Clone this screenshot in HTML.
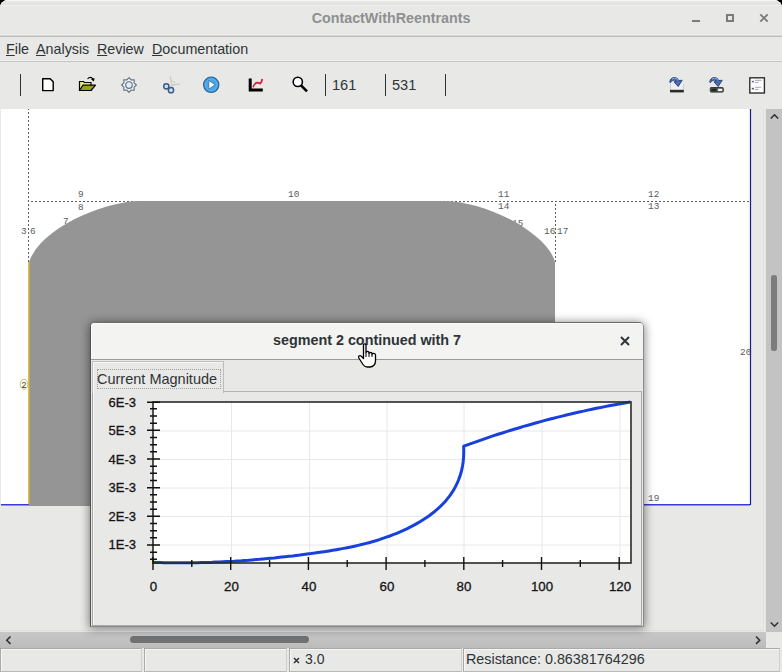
<!DOCTYPE html>
<html><head><meta charset="utf-8">
<style>
html,body{margin:0;padding:0;}
body{width:782px;height:672px;overflow:hidden;position:relative;background:#000;font-family:"Liberation Sans",sans-serif;color:#2e3436;}
.abs{position:absolute;}
#win{position:absolute;left:0;top:0;width:782px;height:672px;background:#e8e8e7;border-radius:8px 8px 0 0;overflow:hidden;}
#title{position:absolute;left:0;top:0;width:782px;height:34px;background:#e8e8e7;}
.ttl{position:absolute;left:0;width:782px;top:10px;text-align:center;font-weight:bold;font-size:14.3px;color:#8e9090;line-height:17px;}
.hl{position:absolute;left:0;width:782px;height:1px;}
.menu{position:absolute;top:41px;font-size:14.3px;line-height:17px;color:#2e3436;}
.menu u{text-decoration:underline;text-decoration-thickness:1px;text-underline-offset:1px;}
.sep{position:absolute;width:1px;background:#2e3436;}
.tnum{position:absolute;top:77px;font-size:14.6px;line-height:17px;color:#2e3436;}
.lbl{position:absolute;font-family:"Liberation Mono",monospace;font-size:9.4px;line-height:10px;color:#5c5c5c;}
.stbox{position:absolute;top:648px;height:22px;border:1px solid #a9a9a9;border-right-color:#d0d0d0;border-bottom-color:#b8b8b8;box-shadow:inset 1px 1px 0 #f7f7f7;}
</style></head>
<body>
<div id="win">
  <div id="title"></div>
  <div class="hl" style="top:0px;background:#f6f6f6"></div>
  <div class="hl" style="top:2px;height:3px;background:#e4e4e3"></div>
  <div class="hl" style="top:5px;background:#efefee"></div>
  <div class="ttl">ContactWithReentrants</div>
  <!-- window controls -->
  <div class="abs" style="left:692px;top:20px;width:8px;height:2px;background:#7b7d7d"></div>
  <div class="abs" style="left:726px;top:14px;width:4px;height:4px;border:2px solid #7b7d7d"></div>
  <svg class="abs" style="left:758px;top:12px" width="12" height="12" viewBox="0 0 12 12"><path d="M2.3 2.3L9.7 9.7M9.7 2.3L2.3 9.7" stroke="#7b7d7d" stroke-width="1.9"/></svg>
  <div class="hl" style="top:34px;background:#efefef"></div>
  <div class="hl" style="top:35px;height:1px;background:#d6d6d6"></div>
  <div class="hl" style="top:36px;background:#bfbfbf"></div>
  <!-- menu -->
  <div class="menu" style="left:6px"><u>F</u>ile</div>
  <div class="menu" style="left:36px"><u>A</u>nalysis</div>
  <div class="menu" style="left:97px"><u>R</u>eview</div>
  <div class="menu" style="left:152px"><u>D</u>ocumentation</div>
  <div class="hl" style="top:60px;background:#efefef"></div>
  <div class="hl" style="top:61px;background:#c4c4c4"></div>

  <!-- toolbar -->
  <div class="sep" style="left:20px;top:74px;height:22px"></div>
  <svg class="abs" style="left:40px;top:76px" width="16" height="17" viewBox="0 0 16 17">
    <path d="M2.7 2.7H10.2L13.2 5.7V14.6H2.7Z" fill="#fff" stroke="#000" stroke-width="1.45" stroke-linejoin="round"/>
  </svg>
  <svg class="abs" style="left:76px;top:74px" width="22" height="20" viewBox="0 0 22 20">
    <path d="M3.5 7.5H7.5L8.5 8.5H15V16.5H3.5Z" fill="#e8e87e" stroke="#000" stroke-width="1.2"/>
    <path d="M3.5 16.5L7 11.2H19.5L15 16.5Z" fill="#96a020" stroke="#000" stroke-width="1.2" stroke-linejoin="round"/>
    <path d="M11.5 4.8Q14.5 1.8 17 5" fill="none" stroke="#000" stroke-width="1.1"/>
    <path d="M15 5.5L18.5 4L18 7.5Z" fill="#000"/>
  </svg>
  <svg class="abs" style="left:120px;top:76px" width="18" height="18" viewBox="0 0 18 18">
    <path d="M9.00 1.60 L11.10 3.92 L14.23 3.77 L14.08 6.90 L16.40 9.00 L14.08 11.10 L14.23 14.23 L11.10 14.08 L9.00 16.40 L6.90 14.08 L3.77 14.23 L3.92 11.10 L1.60 9.00 L3.92 6.90 L3.77 3.77 L6.90 3.92Z" fill="#eef3f8" stroke="#66747f" stroke-width="1.15" stroke-linejoin="round"/>
    <circle cx="9" cy="9" r="3.3" fill="#e2ecf5" stroke="#66747f" stroke-width="1.15"/>
  </svg>
  <svg class="abs" style="left:160px;top:74px" width="22" height="22" viewBox="0 0 22 22">
    <path d="M10 2.5L12 10.5M20 10Q14 10.5 11 12" fill="none" stroke="#c4c8c8" stroke-width="1.2"/>
    <circle cx="13" cy="9" r="1.8" fill="#dfe8d0" stroke="#c8cfc0" stroke-width="0.8"/>
    <circle cx="6.3" cy="12.3" r="2.6" fill="#c8e4f6" stroke="#3d5a82" stroke-width="1.5"/>
    <circle cx="11" cy="16.2" r="2.6" fill="#c8e4f6" stroke="#3d5a82" stroke-width="1.5"/>
  </svg>
  <svg class="abs" style="left:201px;top:75px" width="20" height="20" viewBox="0 0 20 20">
    <circle cx="10.2" cy="9.8" r="7.6" fill="#48a6e6" stroke="#2f6a9c" stroke-width="1.3"/>
    <circle cx="10.2" cy="9.8" r="5.8" fill="none" stroke="#5ab6f0" stroke-width="1"/>
    <path d="M7.8 5.4L14.2 9.8L7.8 14.2Z" fill="#fff" stroke="#2b6ea8" stroke-width="0.8" stroke-linejoin="round"/>
  </svg>
  <svg class="abs" style="left:246px;top:76px" width="20" height="18" viewBox="0 0 20 18">
    <path d="M4.2 2.4V14H16.8" fill="none" stroke="#000" stroke-width="3"/>
    <path d="M7 11.2Q8.8 6.8 11 6.6Q13 6.6 14.2 7.6Q15.8 6 16.3 3" fill="none" stroke="#d41f3c" stroke-width="1.7"/>
  </svg>
  <svg class="abs" style="left:288px;top:74px" width="22" height="20" viewBox="0 0 22 20">
    <circle cx="9.8" cy="7.9" r="4.6" fill="#fff" stroke="#000" stroke-width="1.6"/>
    <path d="M13 11.3L19 17.3" stroke="#000" stroke-width="2.6"/>
  </svg>
  <div class="sep" style="left:325px;top:74px;height:22px"></div>
  <div class="tnum" style="left:332px">161</div>
  <div class="sep" style="left:385px;top:74px;height:22px"></div>
  <div class="tnum" style="left:392px">531</div>
  <div class="sep" style="left:445px;top:74px;height:22px"></div>

  <svg class="abs" style="left:664px;top:72px" width="26" height="26" viewBox="0 0 26 26">
    <path d="M6.5 12V18.5H19.5V12" fill="#eef0f4" stroke="#c9ced6" stroke-width="1"/>
    <path d="M5.8 9.5C6.5 5 12.5 3.8 15 8.6L18.2 8.2L14.2 14.6L10 9.8L12.6 9.4C11 7.6 8.2 7.8 6.2 10.8Z" fill="#4a6fb5" stroke="#273c70" stroke-width="0.9" stroke-linejoin="round"/><path d="M8 7.2C10 5.6 12.5 6 14 8" fill="none" stroke="#8fb0e0" stroke-width="0.9"/>
    <rect x="6" y="17.8" width="13.8" height="2.6" fill="#2e2a28"/>
  </svg>
  <svg class="abs" style="left:704px;top:72px" width="26" height="26" viewBox="0 0 26 26">
    <path d="M5.8 9.5C6.5 5 12.5 3.8 15 8.6L18.2 8.2L14.2 14.6L10 9.8L12.6 9.4C11 7.6 8.2 7.8 6.2 10.8Z" fill="#4a6fb5" stroke="#273c70" stroke-width="0.9" stroke-linejoin="round"/><path d="M8 7.2C10 5.6 12.5 6 14 8" fill="none" stroke="#8fb0e0" stroke-width="0.9"/>
    <rect x="6.3" y="15.5" width="13" height="4.6" rx="0.8" fill="#4a4d4a" stroke="#3a3a3a" stroke-width="1"/>
    <rect x="7.5" y="16.7" width="5" height="2.4" fill="#1d2a1d"/>
    <rect x="13.8" y="16.7" width="4.5" height="2.4" fill="#eef4ec"/>
  </svg>
  <svg class="abs" style="left:744px;top:72px" width="26" height="26" viewBox="0 0 26 26">
    <rect x="5.8" y="5.8" width="14.6" height="15.2" fill="#fff" stroke="#2e2e2e" stroke-width="1.4"/>
    <rect x="7.8" y="8.8" width="2.2" height="1.6" fill="#6070a8"/>
    <rect x="7.8" y="15.8" width="2.2" height="1.6" fill="#485a88"/>
    <path d="M11 8.3H17.5M11 10.4H14.5M11 15.3H17M11 17.4H14.5" stroke="#8a8f98" stroke-width="0.8"/>
  </svg>

  <!-- canvas area -->
  <div class="abs" style="left:0;top:109px;width:766px;height:523px;background:#e8e8e7"></div>
  <div class="abs" style="left:1px;top:109px;width:750px;height:396px;background:#fff"></div>
  <svg class="abs" style="left:0;top:0" width="782" height="672" viewBox="0 0 782 672">
    <path d="M28.5 109V262" stroke="#606060" stroke-width="1" stroke-dasharray="2 2" stroke-dashoffset="1"/>
    <path d="M28 201.5H750" stroke="#606060" stroke-width="1" stroke-dasharray="2 2" stroke-dashoffset="1"/>
    <path d="M555.5 201V262" stroke="#606060" stroke-width="1" stroke-dasharray="2 2" stroke-dashoffset="1"/>
  </svg>
  <div class="lbl" style="left:78px;top:190px">9</div>
  <div class="lbl" style="left:78px;top:203px">8</div>
  <div class="lbl" style="left:288px;top:190px">10</div>
  <div class="lbl" style="left:498px;top:190px">11</div>
  <div class="lbl" style="left:498px;top:202px">14</div>
  <div class="lbl" style="left:648px;top:190px">12</div>
  <div class="lbl" style="left:648px;top:202px">13</div>
  <div class="lbl" style="left:21px;top:227px">3</div>
  <div class="lbl" style="left:30px;top:227px">6</div>
  <div class="lbl" style="left:63px;top:217px">7</div>
  <div class="lbl" style="left:512px;top:219px">15</div>
  <div class="lbl" style="left:544px;top:227px">16</div>
  <div class="lbl" style="left:557px;top:227px">17</div>
  <div class="lbl" style="left:740px;top:348px">20</div>
  <div class="lbl" style="left:648px;top:494px">19</div>
  <svg class="abs" style="left:0;top:0" width="782" height="672" viewBox="0 0 782 672">
    <path d="M29 262C42 224 112 201 138 201H441.4C490 201 548 235 555 262V506H29Z" fill="#959595"/>
    <path d="M29 262V505" stroke="#cfae36" stroke-width="1.6"/>
    <path d="M1 504.8H29M643 504.8H750" fill="none" stroke="#3a3ad6" stroke-width="1.6"/><path d="M750.5 109V505" fill="none" stroke="#1c1c88" stroke-width="1.2"/>
    <ellipse cx="24" cy="384.3" rx="3.8" ry="5" fill="#fff" stroke="#d4c050" stroke-width="1"/>
  </svg>
  <div class="lbl" style="left:21.3px;top:380.5px;font-size:9px;color:#3a3a3a">2</div>

  <div class="abs" style="left:763px;top:109px;width:1px;height:522px;background:#e2e2e2"></div>
  <div class="abs" style="left:0;top:630px;width:763px;height:1px;background:#dedede"></div>
  <!-- scrollbars -->
  <div class="abs" style="left:766px;top:109px;width:16px;height:523px;background:#c3c3c3"></div>
  <div class="abs" style="left:771px;top:275px;width:6px;height:76px;border-radius:2.5px;background:#7a7c7d"></div>
  <svg class="abs" style="left:766px;top:109px" width="16" height="16" viewBox="0 0 16 16"><path d="M4.8 9.5L8.5 5.8L12.2 9.5" fill="none" stroke="#2e3436" stroke-width="1.6"/></svg>
  <svg class="abs" style="left:766px;top:616px" width="16" height="16" viewBox="0 0 16 16"><path d="M4.8 6.5L8.5 10.2L12.2 6.5" fill="none" stroke="#2e3436" stroke-width="1.6"/></svg>
  <div class="abs" style="left:0;top:632px;width:766px;height:16px;background:linear-gradient(#c7c7c7,#bcbcbc)"></div>
  <div class="abs" style="left:130px;top:636px;width:179px;height:7px;border-radius:3.5px;background:#6f7172"></div>
  <svg class="abs" style="left:0;top:632px" width="16" height="16" viewBox="0 0 16 16"><path d="M10.5 4.5L6.8 8.2L10.5 11.9" fill="none" stroke="#2e3436" stroke-width="1.6"/></svg>
  <svg class="abs" style="left:750px;top:632px" width="16" height="16" viewBox="0 0 16 16"><path d="M6 4.5L9.7 8.2L6 11.9" fill="none" stroke="#2e3436" stroke-width="1.6"/></svg>
  <div class="abs" style="left:766px;top:632px;width:16px;height:16px;background:#e8e8e7"></div>

  <!-- status bar -->
  <div class="stbox" style="left:0;width:140px"></div>
  <div class="stbox" style="left:144px;width:141px"></div>
  <div class="stbox" style="left:289px;width:171px"><svg class="abs" style="left:3px;top:8px" width="7" height="7" viewBox="0 0 7 7"><path d="M1 1L6 6M6 1L1 6" stroke="#2e3436" stroke-width="1.5"/></svg><span class="abs" style="left:15px;top:2px;font-size:14px;line-height:17px">3.0</span></div>
  <div class="stbox" style="left:463px;width:315px"><span class="abs" style="left:2px;top:2px;font-size:14.35px;line-height:17px">Resistance: 0.86381764296</span></div>

  <!-- dialog -->
  <div class="abs" style="left:90px;top:322px;width:554px;height:305px;border-radius:5px 5px 0 0;box-shadow:0 1px 10px 1px rgba(0,0,0,0.45);"></div>
  <div class="abs" style="left:90px;top:322px;width:552px;height:303px;border:1px solid #8a8a8a;border-left-color:#525252;border-top-color:#6a6a6a;border-radius:5px 5px 0 0;background:#e8e8e7;"></div>
  <div class="abs" style="left:91px;top:323px;width:552px;height:36px;background:#f3f3f2;border-radius:4px 4px 0 0;box-shadow:inset 1px 1px 0 #fdfdfd"></div>
  <div class="abs" style="left:91px;top:359px;width:552px;height:1px;background:#9a9a9a"></div>
  <div class="abs" style="left:91px;top:332px;width:552px;text-align:center;font-weight:bold;font-size:14.35px;line-height:17px;color:#2e3436">segment 2 continued with 7</div>
  <svg class="abs" style="left:619px;top:335px" width="12" height="12" viewBox="0 0 12 12"><path d="M2 2L10 10M10 2L2 10" stroke="#2e3436" stroke-width="2"/></svg>
  <div class="abs" style="left:92px;top:391px;width:548px;height:233px;border:1px solid #a9a9a9;border-top-color:#b4b4b4;background:#e8e8e7;box-shadow:inset 1px 0 0 #f6f6f6"></div>
  <div class="abs" style="left:92px;top:361px;width:130px;height:31px;border:1px solid #bdbdbd;border-bottom:none;background:#e8e8e7;box-shadow:inset 1px 1px 0 #f8f8f8"></div>
  <div class="abs" style="left:97px;top:369px;width:122px;height:18px;border:1px dotted #a0a0a0"></div>
  <div class="abs" style="left:97px;top:371px;font-size:14.5px;line-height:17px;color:#2e3436">Current Magnitude</div>
  <!-- chart -->
  <svg class="abs" style="left:0;top:0" width="782" height="672" viewBox="0 0 782 672" id="chart">
    <rect x="153" y="402" width="478" height="161" fill="#fff"/>
    <g stroke="#e8e8e8" stroke-width="1">
      <path d="M231.5 402V563M309.5 402V563M387 402V563M464 402V563M542 402V563M620 402V563"/>
      <path d="M153 431H631M153 459.5H631M153 488H631M153 516.5H631M153 545H631"/>
    </g>
    <g font-family="Liberation Sans" font-size="13" fill="#141414" stroke="#141414" stroke-width="0.3" text-anchor="end">
      <text x="136" y="406.5">6E-3</text>
      <text x="136" y="435">5E-3</text>
      <text x="136" y="463.5">4E-3</text>
      <text x="136" y="492">3E-3</text>
      <text x="136" y="520.5">2E-3</text>
      <text x="136" y="549">1E-3</text>
    </g>
    <g font-family="Liberation Sans" font-size="13.3" fill="#141414" stroke="#141414" stroke-width="0.3" text-anchor="middle">
      <text x="153.5" y="590.8">0</text>
      <text x="231.5" y="590.8">20</text>
      <text x="309" y="590.8">40</text>
      <text x="387" y="590.8">60</text>
      <text x="464" y="590.8">80</text>
      <text x="542" y="590.8">100</text>
      <text x="620" y="590.8">120</text>
    </g>
    <path id="curve" d="M153.0,562.3 156.7,562.5 160.4,562.6 164.1,562.7 167.8,562.7 171.5,562.8 175.2,562.8 178.9,562.8 182.5,562.8 186.2,562.8 189.9,562.8 193.6,562.8 197.3,562.7 201.0,562.6 204.6,562.5 208.3,562.4 212.0,562.3 215.7,562.1 219.3,562.0 223.0,561.8 226.7,561.6 230.3,561.4 234.0,561.2 237.7,560.9 241.3,560.7 245.0,560.4 248.7,560.2 252.3,559.9 256.0,559.6 259.6,559.3 263.3,558.9 267.0,558.6 270.6,558.2 274.3,557.9 277.9,557.5 281.6,557.1 285.2,556.7 288.9,556.3 292.5,555.9 296.2,555.4 299.9,555.0 303.5,554.5 307.2,554.0 310.8,553.6 314.5,553.1 318.1,552.5 321.8,552.0 325.4,551.5 329.1,550.9 332.7,550.3 336.4,549.7 340.0,549.1 343.6,548.4 347.2,547.7 350.9,547.0 354.5,546.2 358.0,545.4 361.6,544.5 365.2,543.6 368.8,542.7 372.3,541.7 375.8,540.7 379.3,539.6 382.8,538.4 386.3,537.2 389.8,536.0 393.2,534.7 396.7,533.3 400.1,531.9 403.4,530.4 406.8,528.8 410.1,527.1 413.5,525.4 416.7,523.6 419.9,521.8 423.1,519.8 426.2,517.8 429.2,515.7 432.1,513.5 435.0,511.2 437.7,508.8 440.4,506.4 443.0,503.8 445.4,501.2 447.7,498.4 449.9,495.6 451.9,492.6 453.9,489.6 455.6,486.4 457.2,483.2 458.6,479.8 459.9,476.4 461.0,472.8 461.9,469.2 462.6,465.5 463.2,461.7 463.5,457.9 463.7,454.1 463.8,450.3 463.6,446.5 L463.8,446.2 468.1,444.6 472.3,443.1 476.6,441.6 480.9,440.1 485.2,438.6 489.4,437.2 493.7,435.7 498.0,434.3 502.3,433.0 506.5,431.6 510.8,430.3 515.1,429.0 519.4,427.7 523.6,426.4 527.9,425.2 532.2,424.0 536.5,422.8 540.7,421.6 545.0,420.4 549.3,419.3 553.6,418.2 557.8,417.1 562.1,416.1 566.4,415.0 570.7,414.0 574.9,413.0 579.2,412.0 583.5,411.1 587.8,410.1 592.0,409.2 596.3,408.3 600.6,407.5 604.9,406.6 609.1,405.8 613.4,405.0 617.7,404.3 622.0,403.5 626.2,402.8 630.5,402.1" fill="none" stroke="#1840dc" stroke-width="3" stroke-linejoin="round"/>
    <rect x="153" y="402" width="478" height="161" fill="none" stroke="#2a2a2a" stroke-width="1.6"/>
    <path d="M150 559.3H157M150 552.2H157M147 545.0H160M150 537.8H157M150 530.7H157M150 523.5H157M147 516.3H160M150 509.2H157M150 502.0H157M150 494.8H157M147 487.7H160M150 480.5H157M150 473.3H157M150 466.2H157M147 459.0H160M150 451.8H157M150 444.7H157M150 437.5H157M147 430.3H160M150 423.2H157M150 416.0H157M150 408.8H157M147 402.3H160M153.0 557V570M191.8 560V567M230.7 557V570M269.6 560V567M308.4 557V570M347.2 560V567M386.1 557V570M424.9 560V567M463.8 557V570M502.6 560V567M541.5 557V570M580.3 560V567M619.2 557V570" stroke="#111" stroke-width="1.4"/>
  </svg>
  <!-- cursor -->
  <svg class="abs" style="left:356px;top:342px" width="24" height="28" viewBox="0 0 24 28">
    <path d="M7.5 2.5C8.5 1.5 10 1.8 10 3.5V10.5C10 9 13 9 13 10.5V11.5C13 10 16 10 16 11.5V12.5C16 11 19.5 11 19.5 13V19C19.5 22.5 17 25 14 25H11.5C9.5 25 8 24 7 22.5L2.8 16C2 14.5 3.5 13 5 14L7.5 16.5Z" fill="#fff" stroke="#000" stroke-width="1.3" stroke-linejoin="round"/>
    <path d="M10 10.5V15M13 11.5V15M16 12.5V15" stroke="#000" stroke-width="1"/>
  </svg>
</div>

</body></html>
